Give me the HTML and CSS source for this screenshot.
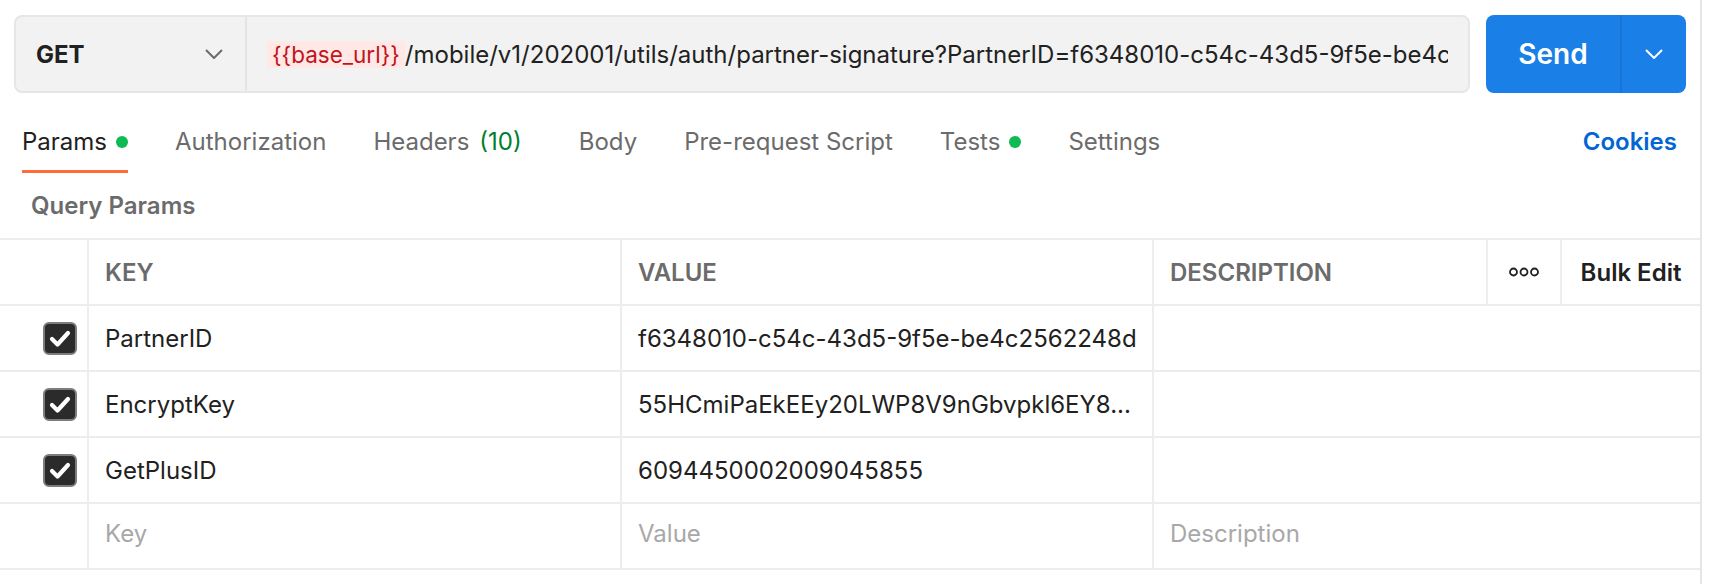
FILE: index.html
```html
<!DOCTYPE html>
<html lang="en">
<head>
<meta charset="utf-8">
<title>Request</title>
<link rel="stylesheet" href="styles.css">
</head>
<body>
<div class="app">
  <div class="request-bar">
    <div class="url-group">
      <div class="method">
        <span class="method-name">GET</span>
        <svg class="chev" width="18" height="10" viewBox="0 0 18 10"><path d="M1 1 L9 9 L17 1" fill="none" stroke="#6b6b6b" stroke-width="2"/></svg>
      </div>
      <div class="url">
        <div class="url-text"><span class="var">{{base_url}}</span>/mobile/v1/202001/utils/auth/partner-signature?PartnerID=f6348010-c54c-43d5-9f5e-be4c</div>
      </div>
    </div>
    <div class="send-group">
      <div class="send">Send</div>
      <div class="send-more">
        <svg width="18" height="10" viewBox="0 0 18 10"><path d="M1 1 L9 9 L17 1" fill="none" stroke="#ffffff" stroke-width="2"/></svg>
      </div>
    </div>
  </div>

  <div class="tabs-row">
    <nav class="tabs">
      <div class="tab active">Params<span class="dot"></span></div>
      <div class="tab">Authorization</div>
      <div class="tab tab-headers">Headers<span class="count">(10)</span></div>
      <div class="tab">Body</div>
      <div class="tab">Pre-request Script</div>
      <div class="tab">Tests<span class="dot"></span></div>
      <div class="tab">Settings</div>
    </nav>
    <div class="cookies">Cookies</div>
  </div>

  <div class="section-title">Query Params</div>

  <div class="params-table">
    <div class="row head">
      <div class="cell check-cell"></div>
      <div class="cell">KEY</div>
      <div class="cell">VALUE</div>
      <div class="cell">DESCRIPTION</div>
      <div class="cell center">
        <svg width="30" height="10" viewBox="0 0 30 10"><circle cx="4.5" cy="5" r="3.5" fill="none" stroke="#212121" stroke-width="1.8"/><circle cx="15" cy="5" r="3.5" fill="none" stroke="#212121" stroke-width="1.8"/><circle cx="25.5" cy="5" r="3.5" fill="none" stroke="#212121" stroke-width="1.8"/></svg>
      </div>
      <div class="cell center bulk">Bulk Edit</div>
    </div>
    <div class="row">
      <div class="cell check-cell"><span class="checkbox"><svg width="30" height="29" viewBox="0 0 30 29"><path d="M7 15 L12.5 20.5 L23 9" fill="none" stroke="#fff" stroke-width="4.2" stroke-linecap="round" stroke-linejoin="round"/></svg></span></div>
      <div class="cell">PartnerID</div>
      <div class="cell">f6348010-c54c-43d5-9f5e-be4c2562248d</div>
      <div class="cell desc"></div>
    </div>
    <div class="row">
      <div class="cell check-cell"><span class="checkbox"><svg width="30" height="29" viewBox="0 0 30 29"><path d="M7 15 L12.5 20.5 L23 9" fill="none" stroke="#fff" stroke-width="4.2" stroke-linecap="round" stroke-linejoin="round"/></svg></span></div>
      <div class="cell">EncryptKey</div>
      <div class="cell">55HCmiPaEkEEy20LWP8V9nGbvpkl6EY8...</div>
      <div class="cell desc"></div>
    </div>
    <div class="row">
      <div class="cell check-cell"><span class="checkbox"><svg width="30" height="29" viewBox="0 0 30 29"><path d="M7 15 L12.5 20.5 L23 9" fill="none" stroke="#fff" stroke-width="4.2" stroke-linecap="round" stroke-linejoin="round"/></svg></span></div>
      <div class="cell">GetPlusID</div>
      <div class="cell">6094450002009045855</div>
      <div class="cell desc"></div>
    </div>
    <div class="row">
      <div class="cell check-cell"></div>
      <div class="cell placeholder">Key</div>
      <div class="cell placeholder">Value</div>
      <div class="cell desc placeholder">Description</div>
    </div>
  </div>
</div>
</body>
</html>
```

FILE: styles.css
```css
* { box-sizing: border-box; }

html, body {
  margin: 0;
  padding: 0;
  background: #ffffff;
}

body {
  font-family: Inter, "Noto Sans", "Liberation Sans", sans-serif;
  font-size: 24px;
  color: #212121;
}

.app {
  width: 1702px;
  min-height: 584px;
  border-right: 2px solid #e6e6e6;
}

/* ---------- request bar ---------- */
.request-bar {
  display: flex;
  gap: 16px;
  padding: 15px 14px 0 14px;
}

.url-group {
  flex: 1;
  height: 78px;
  display: flex;
  background: #f2f2f2;
  border: 2px solid #e6e6e6;
  border-radius: 8px;
  min-width: 0;
}

.method {
  width: 231px;
  flex: none;
  display: flex;
  align-items: center;
  justify-content: space-between;
  padding: 0 22px 0 20px;
  border-right: 2px solid #e4e4e4;
}

.method-name {
  font-weight: 700;
  font-size: 24px;
  color: #212121;
}

.url {
  flex: 1;
  min-width: 0;
  display: flex;
  align-items: center;
  padding: 0 20px;
}

.url-text {
  width: 100%;
  overflow: hidden;
  white-space: nowrap;
  font-size: 24px;
  color: #212121;
  line-height: 27px;
}

.var {
  display: inline-block;
  background: #ffe8e6;
  color: #c2141b;
  padding: 0 5px;
  font-size: 22.5px;
  line-height: 27px;
  vertical-align: top;
}

.send-group {
  width: 200px;
  height: 78px;
  flex: none;
  display: flex;
  background: #1b7fe8;
  border-radius: 8px;
  overflow: hidden;
}

.send {
  width: 136px;
  display: flex;
  align-items: center;
  justify-content: center;
  color: #ffffff;
  font-weight: 600;
  font-size: 28px;
  border-right: 2px solid #1a74d6;
}

.send-more {
  flex: 1;
  display: flex;
  align-items: center;
  justify-content: center;
}

/* ---------- tabs ---------- */
.tabs-row {
  display: flex;
  justify-content: space-between;
  align-items: flex-start;
  margin-top: 17px;
  padding: 0 23px 0 22px;
}

.tabs {
  display: flex;
  gap: 47px;
}

.tab {
  display: flex;
  align-items: center;
  padding: 16px 0 12px;
  line-height: 32px;
  border-bottom: 3px solid transparent;
  color: #6b6b6b;
  font-size: 24px;
}

.tab.active {
  color: #212121;
  border-bottom-color: #ff6c37;
}

.tab-headers {
  margin-right: 10px;
}

.count {
  color: #007f31;
  margin-left: 10px;
}

.dot {
  width: 12px;
  height: 12px;
  border-radius: 50%;
  background: #0cbb52;
  margin-left: 9px;
}

.cookies {
  padding-top: 16px;
  line-height: 32px;
  font-weight: 600;
  color: #0265d2;
}

/* ---------- query params ---------- */
.section-title {
  margin-top: 17px;
  padding-left: 31px;
  line-height: 32px;
  font-weight: 600;
  font-size: 24px;
  color: #6b6b6b;
}

.params-table {
  margin-top: 16px;
  border-top: 2px solid #ededed;
  width: 1700px;
}

.row {
  display: grid;
  grid-template-columns: 87px 533px 532px 334px 74px 140px;
  height: 66px;
  border-bottom: 2px solid #ededed;
}

.cell {
  display: flex;
  align-items: center;
  padding-left: 16px;
  border-left: 2px solid #ededed;
  white-space: nowrap;
  overflow: hidden;
}

.cell.check-cell {
  border-left: none;
  padding: 0 10px 0 0;
  justify-content: flex-end;
}

.cell.desc {
  grid-column: span 3;
}

.head .cell {
  font-weight: 600;
  color: #6b6b6b;
}

.head .cell.center {
  justify-content: center;
  padding-left: 0;
}

.head .cell.bulk {
  color: #212121;
}

.placeholder {
  color: #a8a8a8;
  padding-bottom: 6px;
}

.checkbox {
  width: 34px;
  height: 33px;
  border-radius: 6px;
  background: #2b2b2b;
  border: 2px solid #7d7d7d;
  display: flex;
  align-items: center;
  justify-content: center;
}
```
